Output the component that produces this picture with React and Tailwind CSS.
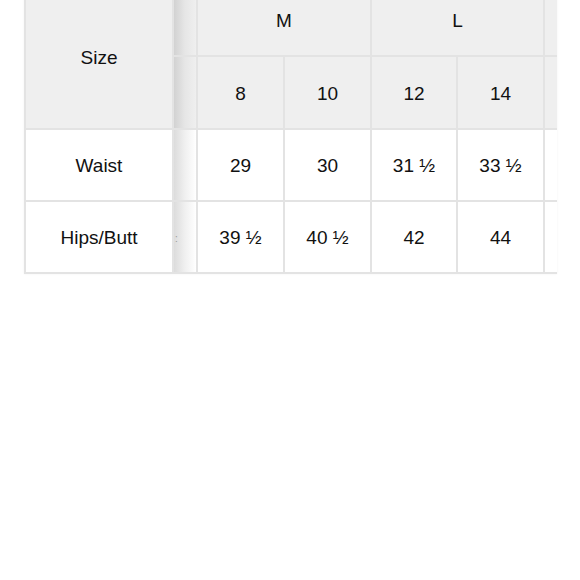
export default function App() {
  const font = { fontFamily: '"Liberation Sans", Arial, sans-serif' };
  const hd = "bg-[#efefef] flex items-center justify-center pt-[3px]";
  const bd = "bg-white flex items-center justify-center pt-[3px]";
  return (
    <div className="w-[580px] h-[580px] bg-white overflow-hidden" style={font}>
      <div className="ml-[24px] mt-[-17px] w-[533px] bg-[#e3e3e3] p-[2px] pr-0 text-[19px] text-[#111] shadow-[0_0_2px_rgba(0,0,0,0.06)]">
        <div className="grid grid-cols-[146px_22px_85px_85px_84px_85px_12px] grid-rows-[70px_71px_70px_70px] gap-[2px]">
          <div className={`${hd} row-span-2`}>Size</div>
          <div className="bg-linear-to-r from-[#d2d2d2] via-[#e6e6e6] to-[#efefef]" />
          <div className={`${hd} col-span-2`}>M</div>
          <div className={`${hd} col-span-2`}>L</div>
          <div className="bg-[#efefef]" />

          <div className="bg-linear-to-r from-[#d2d2d2] via-[#e6e6e6] to-[#efefef]" />
          <div className={hd}>8</div>
          <div className={hd}>10</div>
          <div className={hd}>12</div>
          <div className={hd}>14</div>
          <div className="bg-[#efefef]" />

          <div className={bd}>Waist</div>
          <div className="bg-linear-to-r from-[#dcdcdc] via-[#f0f0f0] to-white" />
          <div className={bd}>29</div>
          <div className={bd}>30</div>
          <div className={bd}>31 ½</div>
          <div className={bd}>33 ½</div>
          <div className="bg-white" />

          <div className={bd}>Hips/Butt</div>
          <div className="bg-linear-to-r from-[#dcdcdc] via-[#f0f0f0] to-white flex items-center pt-[3px]">
            <span className="ml-[1px] text-[10px] text-[#9a9a9a] leading-none">:</span>
          </div>
          <div className={bd}>39 ½</div>
          <div className={bd}>40 ½</div>
          <div className={bd}>42</div>
          <div className={bd}>44</div>
          <div className="bg-white" />
        </div>
      </div>
    </div>
  );
}
